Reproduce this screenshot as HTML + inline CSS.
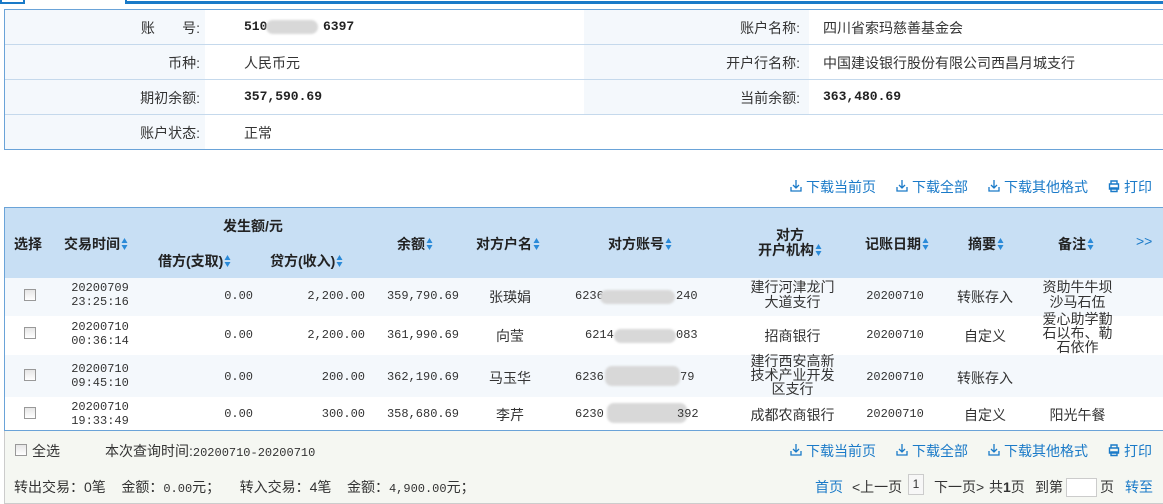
<!DOCTYPE html>
<html><head><meta charset="utf-8"><style>
*{margin:0;padding:0;box-sizing:border-box}
body{width:1163px;height:504px;overflow:hidden;background:#fff;font-family:"Liberation Sans","Noto Sans CJK SC",sans-serif;font-size:14px;color:#333;position:relative}
.a{position:absolute;white-space:nowrap}
.c{text-align:center}
.r{text-align:right}
.m{font-family:"Liberation Mono","Noto Sans CJK SC",monospace;font-size:12px}
.mb{font-family:"Liberation Mono",monospace;font-size:13px;font-weight:bold;color:#222}
.lk{color:#1a7ac8}
.hd{font-weight:bold;color:#222;font-size:14px}
.ar{display:inline-block;width:7px;height:14px;vertical-align:-2px;margin-left:1px}
.cb{position:absolute;width:12px;height:12px;border:1px solid #999;background:linear-gradient(#e6e6e6,#fff)}
.blur{position:absolute;height:14px;background:#d8d8d8;border-radius:7px;filter:blur(1px)}
.ic{position:absolute;width:12px;height:14px}
</style></head><body>
<svg width="0" height="0" style="position:absolute"><defs>
<symbol id="s" viewBox="0 0 7 14"><path d="M3.5 1L6.5 6H0.5Z M3.5 13L6.5 8H0.5Z" fill="#2a8ad8"/></symbol>
<symbol id="dl" viewBox="0 0 12 14"><path d="M6 1V9M3 6L6 9L9 6M1 8V12H11V8" fill="none" stroke="#1a7ac8" stroke-width="1.3"/></symbol>
<symbol id="pr" viewBox="0 0 12 14"><path d="M3 5V2H9V5M1.5 5H10.5V10H1.5ZM3 9H9V12.5H3Z" fill="none" stroke="#1a7ac8" stroke-width="1.4"/></symbol>
</defs></svg>
<!-- top tabs -->
<div class="a" style="left:0;top:0;width:25px;height:4px;border:2px solid #1a7ac8;border-top:none"></div>
<div class="a" style="left:125px;top:0;width:1038px;height:4px;border-bottom:3px solid #1a7ac8;border-left:2px solid #1a7ac8"></div>
<!-- info table -->
<div class="a" style="left:4px;top:9px;width:1159px;height:141px;border:1px solid #6aa3d8;border-right:none"></div>
<div class="a" style="left:5px;top:10px;width:200px;height:139px;background:#f4f8fc"></div>
<div class="a" style="left:584px;top:10px;width:225px;height:104px;background:#f4f8fc"></div>
<div class="a" style="left:5px;top:44px;width:1158px;height:1px;background:#c5d9ec"></div>
<div class="a" style="left:5px;top:79px;width:1158px;height:1px;background:#c5d9ec"></div>
<div class="a" style="left:5px;top:114px;width:1158px;height:1px;background:#c5d9ec"></div>
<div class="a r" style="left:90px;top:18px;width:110px">账&nbsp;&nbsp;&nbsp;&nbsp;&nbsp;&nbsp;&nbsp;号:</div>
<div class="a mb" style="left:244px;top:19px">510</div>
<div class="blur" style="left:266px;top:20px;width:52px"></div>
<div class="a mb" style="left:323px;top:19px">6397</div>
<div class="a r" style="left:90px;top:53px;width:110px">币种:</div>
<div class="a" style="left:244px;top:53px">人民币元</div>
<div class="a r" style="left:90px;top:88px;width:110px">期初余额:</div>
<div class="a mb" style="left:244px;top:89px">357,590.69</div>
<div class="a r" style="left:90px;top:123px;width:110px">账户状态:</div>
<div class="a" style="left:244px;top:123px">正常</div>
<div class="a r" style="left:690px;top:18px;width:110px">账户名称:</div>
<div class="a" style="left:823px;top:18px">四川省索玛慈善基金会</div>
<div class="a r" style="left:690px;top:53px;width:110px">开户行名称:</div>
<div class="a" style="left:823px;top:53px">中国建设银行股份有限公司西昌月城支行</div>
<div class="a r" style="left:690px;top:88px;width:110px">当前余额:</div>
<div class="a mb" style="left:823px;top:89px">363,480.69</div>
<!-- toolbar -->
<svg class="ic" style="left:790px;top:179px"><use href="#dl"/></svg><div class="a lk" style="left:806px;top:177px">下载当前页</div>
<svg class="ic" style="left:896px;top:179px"><use href="#dl"/></svg><div class="a lk" style="left:912px;top:177px">下载全部</div>
<svg class="ic" style="left:988px;top:179px"><use href="#dl"/></svg><div class="a lk" style="left:1004px;top:177px">下载其他格式</div>
<svg class="ic" style="left:1108px;top:179px"><use href="#pr"/></svg><div class="a lk" style="left:1124px;top:177px">打印</div>
<!-- grid -->
<div class="a" style="left:4px;top:207px;width:1159px;height:224px;border:1px solid #6aa3d8;border-right:none"></div>
<div class="a" style="left:5px;top:208px;width:1158px;height:70px;background:#c8dff4"></div>
<div class="a" style="left:5px;top:278px;width:1158px;height:38px;background:#f4f8fc"></div>
<div class="a" style="left:5px;top:355px;width:1158px;height:42px;background:#f4f8fc"></div>
<div class="a hd" style="left:14px;top:234px">选择</div>
<div class="a hd" style="left:64px;top:234px">交易时间<svg class="ar"><use href="#s"/></svg></div>
<div class="a hd" style="left:223px;top:216px">发生额/元</div>
<div class="a hd" style="left:158px;top:251px">借方(支取)<svg class="ar"><use href="#s"/></svg></div>
<div class="a hd" style="left:270px;top:251px">贷方(收入)<svg class="ar"><use href="#s"/></svg></div>
<div class="a hd" style="left:397px;top:234px">余额<svg class="ar"><use href="#s"/></svg></div>
<div class="a hd" style="left:476px;top:234px">对方户名<svg class="ar"><use href="#s"/></svg></div>
<div class="a hd" style="left:608px;top:234px">对方账号<svg class="ar"><use href="#s"/></svg></div>
<div class="a hd c" style="left:740px;top:228px;width:100px;line-height:15px">对方<br>开户机构<svg class="ar"><use href="#s"/></svg></div>
<div class="a hd" style="left:865px;top:234px">记账日期<svg class="ar"><use href="#s"/></svg></div>
<div class="a hd" style="left:968px;top:234px">摘要<svg class="ar"><use href="#s"/></svg></div>
<div class="a hd" style="left:1058px;top:234px">备注<svg class="ar"><use href="#s"/></svg></div>
<div class="a lk" style="left:1136px;top:233px;font-size:14px">&gt;&gt;</div>
<!-- rows -->
<div class="cb" style="left:24px;top:289px"></div>
<div class="a c m" style="left:60px;top:281px;width:80px;line-height:14px">20200709<br>23:25:16</div>
<div class="a r m" style="left:180px;top:289px;width:73px">0.00</div>
<div class="a r m" style="left:280px;top:289px;width:85px">2,200.00</div>
<div class="a r m" style="left:370px;top:289px;width:89px">359,790.69</div>
<div class="a c" style="left:470px;top:287px;width:80px">张瑛娟</div>
<div class="a m" style="left:575px;top:289px">6236</div><div class="blur" style="left:600px;top:290px;width:75px"></div><div class="a m" style="left:676px;top:289px">240</div>
<div class="a c" style="left:740px;top:280px;width:105px;line-height:15px">建行河津龙门<br>大道支行</div>
<div class="a c m" style="left:860px;top:289px;width:70px">20200710</div>
<div class="a c" style="left:950px;top:287px;width:70px">转账存入</div>
<div class="a c" style="left:1035px;top:280px;width:85px;line-height:15px">资助牛牛坝<br>沙马石伍</div>

<div class="cb" style="left:24px;top:327px"></div>
<div class="a c m" style="left:60px;top:320px;width:80px;line-height:14px">20200710<br>00:36:14</div>
<div class="a r m" style="left:180px;top:328px;width:73px">0.00</div>
<div class="a r m" style="left:280px;top:328px;width:85px">2,200.00</div>
<div class="a r m" style="left:370px;top:328px;width:89px">361,990.69</div>
<div class="a c" style="left:470px;top:326px;width:80px">向莹</div>
<div class="a m" style="left:585px;top:328px">6214</div><div class="blur" style="left:614px;top:329px;width:62px"></div><div class="a m" style="left:676px;top:328px">083</div>
<div class="a c" style="left:740px;top:326px;width:105px">招商银行</div>
<div class="a c m" style="left:860px;top:328px;width:70px">20200710</div>
<div class="a c" style="left:950px;top:326px;width:70px">自定义</div>
<div class="a c" style="left:1035px;top:312px;width:85px;line-height:14px">爱心助学勤<br>石以布、勒<br>石依作</div>

<div class="cb" style="left:24px;top:369px"></div>
<div class="a c m" style="left:60px;top:362px;width:80px;line-height:14px">20200710<br>09:45:10</div>
<div class="a r m" style="left:180px;top:370px;width:73px">0.00</div>
<div class="a r m" style="left:280px;top:370px;width:85px">200.00</div>
<div class="a r m" style="left:370px;top:370px;width:89px">362,190.69</div>
<div class="a c" style="left:470px;top:368px;width:80px">马玉华</div>
<div class="a m" style="left:575px;top:370px">6236</div><div class="blur" style="left:605px;top:366px;width:75px;height:20px"></div><div class="a m" style="left:680px;top:370px">79</div>
<div class="a c" style="left:740px;top:354px;width:105px;line-height:14px">建行西安高新<br>技术产业开发<br>区支行</div>
<div class="a c m" style="left:860px;top:370px;width:70px">20200710</div>
<div class="a c" style="left:950px;top:368px;width:70px">转账存入</div>

<div class="cb" style="left:24px;top:407px"></div>
<div class="a c m" style="left:60px;top:400px;width:80px;line-height:14px">20200710<br>19:33:49</div>
<div class="a r m" style="left:180px;top:407px;width:73px">0.00</div>
<div class="a r m" style="left:280px;top:407px;width:85px">300.00</div>
<div class="a r m" style="left:370px;top:407px;width:89px">358,680.69</div>
<div class="a c" style="left:470px;top:405px;width:80px">李芹</div>
<div class="a m" style="left:575px;top:407px">6230</div><div class="blur" style="left:607px;top:403px;width:80px;height:20px"></div><div class="a m" style="left:677px;top:407px">392</div>
<div class="a c" style="left:740px;top:405px;width:105px">成都农商银行</div>
<div class="a c m" style="left:860px;top:407px;width:70px">20200710</div>
<div class="a c" style="left:950px;top:405px;width:70px">自定义</div>
<div class="a c" style="left:1035px;top:405px;width:85px">阳光午餐</div>
<!-- footer -->
<div class="a" style="left:4px;top:431px;width:1159px;height:73px;background:#f5f7f2;border-left:1px solid #ccc;border-bottom:1px solid #ccc"></div>
<div class="cb" style="left:15px;top:444px"></div>
<div class="a" style="left:32px;top:441px">全选</div>
<div class="a" style="left:105px;top:441px">本次查询时间:<span class="m">20200710-20200710</span></div>
<div class="a" style="left:14px;top:477px">转出交易：0笔&nbsp;&nbsp;&nbsp;&nbsp;金额：<span class="m">0.00</span>元；&nbsp;&nbsp;&nbsp;&nbsp;&nbsp;转入交易：4笔&nbsp;&nbsp;&nbsp;&nbsp;金额：<span class="m">4,900.00</span>元；</div>
<svg class="ic" style="left:790px;top:443px"><use href="#dl"/></svg><div class="a lk" style="left:806px;top:441px">下载当前页</div>
<svg class="ic" style="left:896px;top:443px"><use href="#dl"/></svg><div class="a lk" style="left:912px;top:441px">下载全部</div>
<svg class="ic" style="left:988px;top:443px"><use href="#dl"/></svg><div class="a lk" style="left:1004px;top:441px">下载其他格式</div>
<svg class="ic" style="left:1108px;top:443px"><use href="#pr"/></svg><div class="a lk" style="left:1124px;top:441px">打印</div>
<div class="a lk" style="left:815px;top:477px">首页</div>
<div class="a" style="left:852px;top:477px">&lt;上一页</div>
<div class="a c" style="left:908px;top:474px;width:16px;height:21px;border:1px solid #ccc;background:#f7f7f7;line-height:19px;font-size:12px">1</div>
<div class="a" style="left:934px;top:477px">下一页&gt;</div>
<div class="a" style="left:989px;top:477px">共<b>1</b>页</div>
<div class="a" style="left:1035px;top:477px">到第</div>
<div class="a" style="left:1066px;top:478px;width:31px;height:19px;border:1px solid #ccc;background:#fff"></div>
<div class="a" style="left:1100px;top:477px">页</div>
<div class="a lk" style="left:1125px;top:477px">转至</div>
</body></html>
